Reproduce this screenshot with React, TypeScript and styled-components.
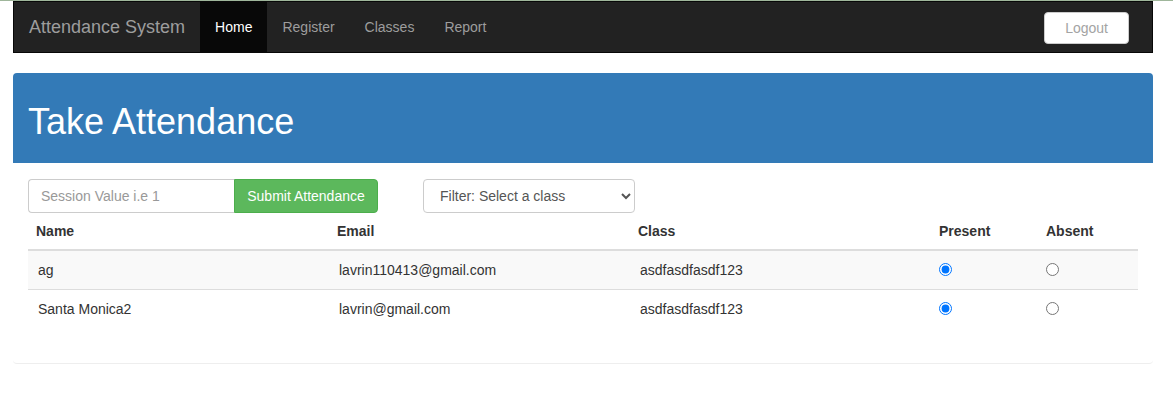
import React from "react";
import styled, { createGlobalStyle } from "styled-components";

const GlobalStyle = createGlobalStyle`
  html, body {
    margin: 0;
    padding: 0;
    background: #fff;
  }
  body {
    border-top: 1px solid #9fb69b;
    font-family: "Liberation Sans", Arial, Helvetica, sans-serif;
    font-size: 14px;
    line-height: 1.42857;
    color: #333;
  }
  * {
    box-sizing: border-box;
  }
`;

const Page = styled.div`
  width: 1140px;
  margin-left: 13px;
`;

const Navbar = styled.nav`
  display: flex;
  align-items: stretch;
  height: 52px;
  background: #222;
  border: 1px solid #080808;
  padding: 0 23px 0 0;
`;

const Brand = styled.a`
  padding: 15px;
  font-size: 18px;
  line-height: 20px;
  color: #9d9d9d;
  text-decoration: none;
`;

const NavList = styled.ul`
  display: flex;
  margin: 0;
  padding: 0;
  list-style: none;
  flex: 1;
`;

const NavLink = styled.a<{ $active?: boolean }>`
  display: block;
  padding: 15px;
  line-height: 20px;
  color: ${({ $active }) => ($active ? "#fff" : "#9d9d9d")};
  background: ${({ $active }) => ($active ? "#080808" : "transparent")};
  text-decoration: none;
`;

const LogoutButton = styled.button`
  align-self: center;
  margin-top: 2px;
  height: 32px;
  padding: 6px 20px;
  font-family: inherit;
  font-size: 14px;
  color: #a3a3a3;
  background: #fff;
  border: 1px solid #ccc;
  border-radius: 4px;
`;

const Jumbotron = styled.div`
  margin-top: 20px;
  padding: 29px 15px 21px;
  background: #337ab7;
  border-radius: 4px 4px 0 0;
`;

const Title = styled.h1`
  margin: 0;
  font-size: 36px;
  font-weight: 500;
  line-height: 1.1;
  color: #fff;
`;

const Panel = styled.div`
  padding: 16px 15px 35px;
  background: #fff;
  border-bottom: 1px solid #eee;
  border-radius: 0 0 4px 4px;
`;

const Controls = styled.div`
  display: flex;
  align-items: center;
  gap: 45px;
`;

const InputGroup = styled.div`
  display: flex;
`;

const SessionInput = styled.input`
  width: 206px;
  height: 34px;
  padding: 6px 12px;
  font-family: inherit;
  font-size: 14px;
  color: #555;
  border: 1px solid #ccc;
  border-right: 0;
  border-radius: 4px 0 0 4px;
  outline: none;

  &::placeholder {
    color: #999;
  }
`;

const SubmitButton = styled.button`
  width: 144px;
  height: 34px;
  padding: 6px 12px;
  font-family: inherit;
  font-size: 14px;
  color: #fff;
  background: #5cb85c;
  border: 1px solid #4cae4c;
  border-radius: 0 4px 4px 0;
`;

const ClassSelect = styled.select`
  width: 212px;
  height: 34px;
  padding: 6px 12px;
  font-family: inherit;
  font-size: 14px;
  color: #555;
  background: #fff;
  border: 1px solid #ccc;
  border-radius: 4px;
`;

const Table = styled.table`
  width: 1110px;
  border-collapse: collapse;
  table-layout: fixed;
`;

const Th = styled.th<{ $w: number }>`
  width: ${({ $w }) => $w}px;
  padding: 8px;
  text-align: left;
  font-weight: bold;
  line-height: 20px;
  border-bottom: 2px solid #ddd;
`;

const Row = styled.tr<{ $striped?: boolean; $first?: boolean }>`
  background: ${({ $striped }) => ($striped ? "#f9f9f9" : "transparent")};

  td {
    border-top: ${({ $first }) => ($first ? "0" : "1px solid #ddd")};
  }
`;

const Td = styled.td<{ $radio?: boolean }>`
  padding: ${({ $radio }) => ($radio ? "9px 8px" : "9px 10px")};
  line-height: 20px;
  vertical-align: middle;
`;

const Radio = styled.input`
  display: block;
  width: 13px;
  height: 13px;
  margin: 0;
`;

const students = [
  { id: 1, name: "ag", email: "lavrin110413@gmail.com", cls: "asdfasdfasdf123" },
  { id: 2, name: "Santa Monica2", email: "lavrin@gmail.com", cls: "asdfasdfasdf123" },
];

const App = () => (
  <>
    <GlobalStyle />
    <Page>
      <Navbar>
        <Brand href="#">Attendance System</Brand>
        <NavList>
          <li><NavLink $active href="#">Home</NavLink></li>
          <li><NavLink href="#">Register</NavLink></li>
          <li><NavLink href="#">Classes</NavLink></li>
          <li><NavLink href="#">Report</NavLink></li>
        </NavList>
        <LogoutButton>Logout</LogoutButton>
      </Navbar>

      <Jumbotron>
        <Title>Take Attendance</Title>
      </Jumbotron>

      <Panel>
        <Controls>
          <InputGroup>
            <SessionInput placeholder="Session Value i.e 1" />
            <SubmitButton>Submit Attendance</SubmitButton>
          </InputGroup>
          <ClassSelect defaultValue="">
            <option value="">Filter: Select a class</option>
          </ClassSelect>
        </Controls>

        <Table>
          <thead>
            <tr>
              <Th $w={301}>Name</Th>
              <Th $w={301}>Email</Th>
              <Th $w={301}>Class</Th>
              <Th $w={107}>Present</Th>
              <Th $w={100}>Absent</Th>
            </tr>
          </thead>
          <tbody>
            {students.map((s, i) => (
              <Row key={s.id} $striped={i % 2 === 0} $first={i === 0}>
                <Td>{s.name}</Td>
                <Td>{s.email}</Td>
                <Td>{s.cls}</Td>
                <Td $radio>
                  <Radio type="radio" name={`att-${s.id}`} defaultChecked />
                </Td>
                <Td $radio>
                  <Radio type="radio" name={`att-${s.id}`} />
                </Td>
              </Row>
            ))}
          </tbody>
        </Table>
      </Panel>
    </Page>
  </>
);

export default App;
